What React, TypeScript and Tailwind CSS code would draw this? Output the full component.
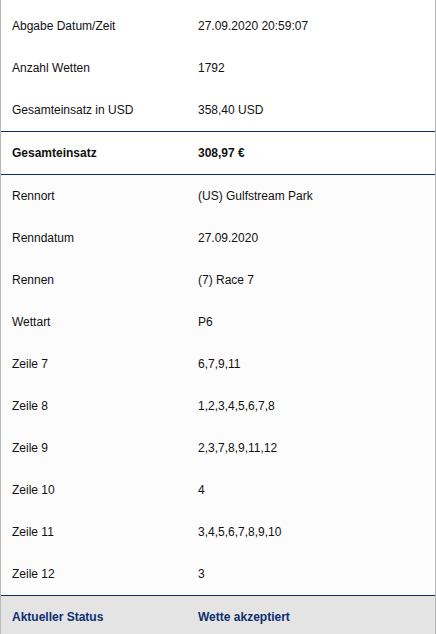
import React from "react";

type Row = { label: string; value: string };

const topRows: Row[] = [
  { label: "Abgabe Datum/Zeit", value: "27.09.2020 20:59:07" },
  { label: "Anzahl Wetten", value: "1792" },
  { label: "Gesamteinsatz in USD", value: "358,40 USD" },
];

const detailRows: Row[] = [
  { label: "Rennort", value: "(US) Gulfstream Park" },
  { label: "Renndatum", value: "27.09.2020" },
  { label: "Rennen", value: "(7) Race 7" },
  { label: "Wettart", value: "P6" },
  { label: "Zeile 7", value: "6,7,9,11" },
  { label: "Zeile 8", value: "1,2,3,4,5,6,7,8" },
  { label: "Zeile 9", value: "2,3,7,8,9,11,12" },
  { label: "Zeile 10", value: "4" },
  { label: "Zeile 11", value: "3,4,5,6,7,8,9,10" },
  { label: "Zeile 12", value: "3" },
];

function InfoRow({ label, value }: Row) {
  return (
    <div className="flex h-[42px] items-center pl-[11px]">
      <div className="w-[186px]">{label}</div>
      <div>{value}</div>
    </div>
  );
}

export default function App() {
  return (
    <div
      className="h-[634px] w-[436px] overflow-hidden border-x border-[#b8b8b8] bg-white text-[12px] text-[#111]"
      style={{ fontFamily: '"Liberation Sans", Arial, sans-serif' }}
    >
      {/* Abgabe */}
      <div className="pt-[5px]">
        {topRows.map((r) => (
          <InfoRow key={r.label} {...r} />
        ))}
      </div>

      {/* Summe */}
      <div className="border-y border-[#0d2f6e] font-bold">
        <InfoRow label="Gesamteinsatz" value="308,97 €" />
      </div>

      {/* Details */}
      <div className="bg-[#fcfcfc]">
        {detailRows.map((r) => (
          <InfoRow key={r.label} {...r} />
        ))}
      </div>

      {/* Status */}
      <div className="border-t border-[#0d2f6e] bg-[#e4e4e4] font-bold text-[#0d2f6e]">
        <InfoRow label="Aktueller Status" value="Wette akzeptiert" />
      </div>
    </div>
  );
}
